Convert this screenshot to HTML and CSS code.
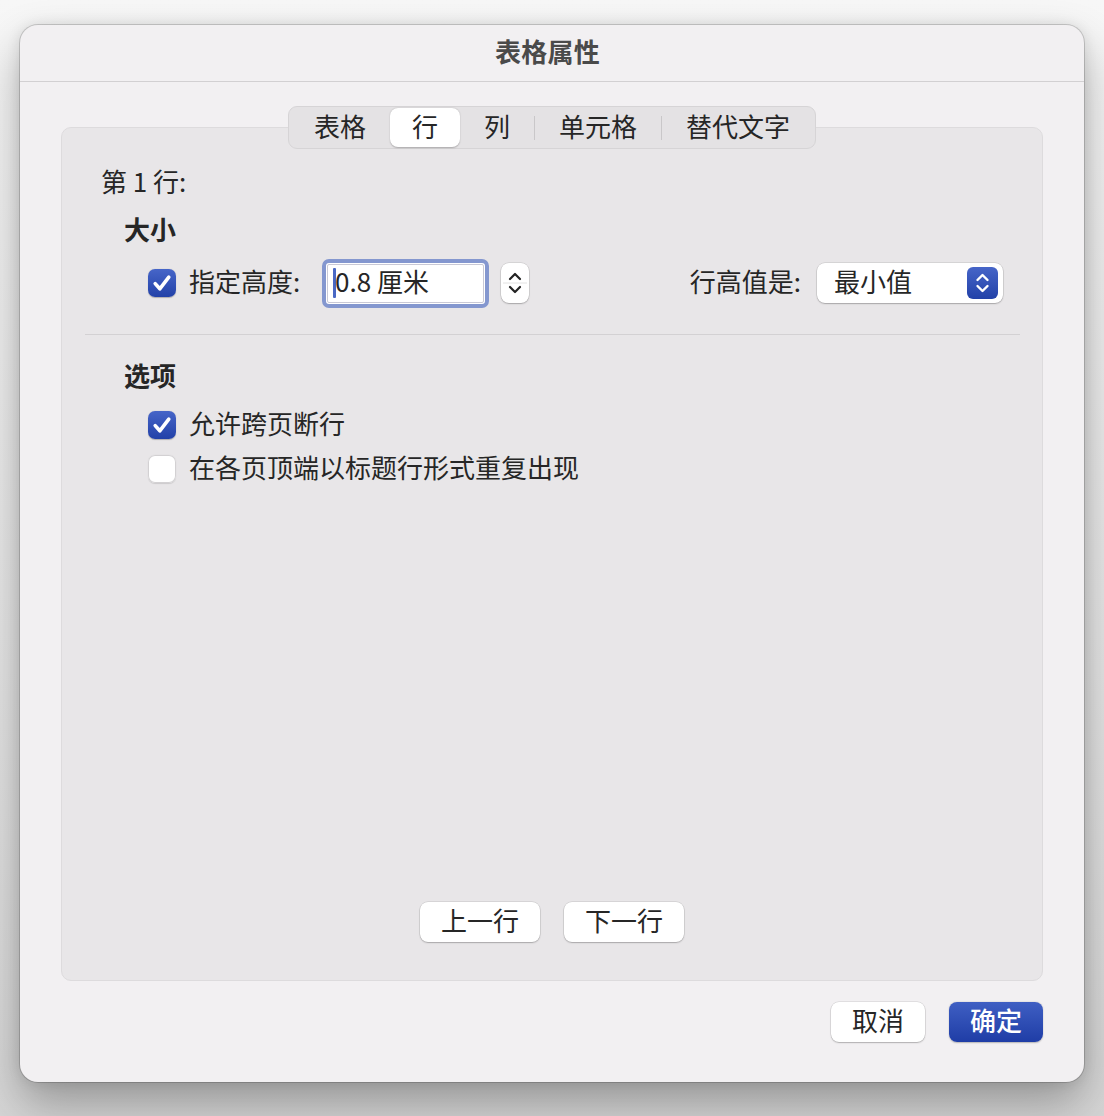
FILE: index.html
```html
<!DOCTYPE html>
<html lang="zh-CN">
<head>
<meta charset="utf-8">
<title>表格属性</title>
<link rel="stylesheet" href="styles.css">
</head>
<body>
<div class="window">
  <div class="titlebar"><span class="title-text">表格属性</span></div>
  <div class="content">
    <div class="tabs">
      <div class="tab">表格</div>
      <div class="tab active">行</div>
      <div class="tab">列</div>
      <div class="tab-sep"></div>
      <div class="tab">单元格</div>
      <div class="tab-sep"></div>
      <div class="tab">替代文字</div>
    </div>
    <div class="group">
      <div class="row-label">第 1 行:</div>
      <div class="section-title">大小</div>
      <div class="size-row">
        <div class="size-left">
          <span class="checkbox checked">
            <svg viewBox="0 0 28 28" width="28" height="28"><path d="M7.2 14.6 L11.8 19.8 L20.8 8.2" fill="none" stroke="#fff" stroke-width="3.6" stroke-linecap="round" stroke-linejoin="round"/></svg>
          </span>
          <span class="field-label">指定高度:</span>
          <div class="textfield">
            <div class="textfield-inner"><span class="caret"></span><span class="field-value">0.8 厘米</span></div>
          </div>
          <div class="stepper">
            <svg viewBox="0 0 28 40" width="28" height="40">
              <path d="M9 16 L14 11 L19 16" fill="none" stroke="#222" stroke-width="2.2" stroke-linecap="round" stroke-linejoin="round"/>
              <line x1="2" y1="20" x2="26" y2="20" stroke="#e2e2e2" stroke-width="1"/>
              <path d="M9 24 L14 29 L19 24" fill="none" stroke="#222" stroke-width="2.2" stroke-linecap="round" stroke-linejoin="round"/>
            </svg>
          </div>
        </div>
        <div class="size-right">
          <span class="popup-label">行高值是:</span>
          <div class="popup">
            <span class="popup-text">最小值</span>
            <span class="popup-arrows">
              <svg viewBox="0 0 31 32" width="31" height="32">
                <path d="M10.5 13 L15.5 8 L20.5 13" fill="none" stroke="#fff" stroke-width="2.4" stroke-linecap="round" stroke-linejoin="round"/>
                <path d="M10.5 19 L15.5 24 L20.5 19" fill="none" stroke="#fff" stroke-width="2.4" stroke-linecap="round" stroke-linejoin="round"/>
              </svg>
            </span>
          </div>
        </div>
      </div>
      <div class="divider"></div>
      <div class="section-title options-title">选项</div>
      <div class="check-row first">
        <span class="checkbox checked">
          <svg viewBox="0 0 28 28" width="28" height="28"><path d="M7.2 14.6 L11.8 19.8 L20.8 8.2" fill="none" stroke="#fff" stroke-width="3.6" stroke-linecap="round" stroke-linejoin="round"/></svg>
        </span>
        <span class="check-text">允许跨页断行</span>
      </div>
      <div class="check-row">
        <span class="checkbox"></span>
        <span class="check-text">在各页顶端以标题行形式重复出现</span>
      </div>
      <div class="nav-buttons">
        <div class="button">上一行</div>
        <div class="button">下一行</div>
      </div>
    </div>
    <div class="footer">
      <div class="button footer-btn">取消</div>
      <div class="button footer-btn primary">确定</div>
    </div>
  </div>
</div>
</body>
</html>
```
FILE: styles.css
```css
html, body {
  margin: 0;
  padding: 0;
}
body {
  width: 1104px;
  height: 1116px;
  background: linear-gradient(180deg, #f7f7f7 0%, #e6e6e6 60%, #d6d6d6 100%);
  font-family: "Noto Sans CJK SC", "Noto Sans", sans-serif;
  color: #262626;
  overflow: hidden;
  padding-top: 25px;
  box-sizing: border-box;
}
.window {
  margin-left: 20px;
  width: 1064px;
  height: 1057px;
  background: #f2f0f2;
  border-radius: 18px;
  box-shadow: 0 0 0 1px rgba(0,0,0,0.16), 0 22px 46px rgba(0,0,0,0.30), 0 0 14px rgba(0,0,0,0.10);
  display: flex;
  flex-direction: column;
  overflow: hidden;
}
.titlebar {
  height: 57px;
  box-sizing: border-box;
  border-bottom: 1px solid #d2d0d2;
  display: flex;
  align-items: center;
  justify-content: center;
  padding: 0 9px 4px 0;
}
.title-text {
  font-size: 26px;
  line-height: 36px;
  font-weight: 700;
  color: #4a4a4a;
  letter-spacing: 0.3px;
}
.content {
  padding: 24px 41px 40px 41px;
  display: flex;
  flex-direction: column;
}
.tabs {
  position: relative;
  z-index: 1;
  align-self: center;
  height: 43px;
  box-sizing: border-box;
  border: 1px solid #d6d4d6;
  background: #e4e2e4;
  border-radius: 9px;
  padding: 1px;
  display: flex;
  align-items: center;
}
.tab {
  height: 39px;
  box-sizing: border-box;
  line-height: 36px;
  padding: 0 24px 3px 24px;
  font-size: 26px;
  color: #262626;
  border-radius: 8px;
}
.tab.active {
  background: #ffffff;
  padding: 0 22px 3px 22px;
  box-shadow: 0 0.5px 1.5px rgba(0,0,0,0.25);
}
.tab-sep {
  width: 1px;
  height: 24px;
  background: #c9c7c9;
}
.group {
  margin-top: -22px;
  height: 854px;
  box-sizing: border-box;
  background: #e8e6e8;
  border: 1px solid #dddbdd;
  border-radius: 10px;
  padding: 37px 39px 38px 39px;
  display: flex;
  flex-direction: column;
}
.row-label {
  font-size: 26px;
  line-height: 32px;
  height: 36px;
}
.section-title {
  font-size: 26px;
  font-weight: 700;
  line-height: 32px;
  height: 36px;
  margin-top: 12px;
  padding-left: 23px;
}
.size-row {
  margin-top: 9px;
  height: 50px;
  display: flex;
  align-items: center;
  justify-content: space-between;
  padding-left: 47px;
}
.size-left, .size-right {
  display: flex;
  align-items: center;
}
.checkbox {
  width: 28px;
  height: 28px;
  box-sizing: border-box;
  border-radius: 7px;
  background: #ffffff;
  box-shadow: inset 0 0 0 1px #d3d1d3, 0 0.5px 1px rgba(0,0,0,0.12);
  display: inline-flex;
  flex: none;
}
.checkbox.checked {
  background: linear-gradient(180deg, #4665c8 0%, #2241a8 100%);
  box-shadow: 0 0.5px 1px rgba(0,0,0,0.25);
}
.field-label {
  margin-left: 13px;
  width: 120px;
  margin-right: 13px;
  font-size: 26px;
  line-height: 36px;
  padding-bottom: 4px;
}
.textfield {
  width: 167px;
  height: 49px;
  box-sizing: border-box;
  border: 4px solid #8497cf;
  border-radius: 7px;
  background: #ffffff;
  padding: 1px;
}
.textfield-inner {
  height: 100%;
  box-sizing: border-box;
  border: 1px solid #c9c9d6;
  border-radius: 2px;
  display: flex;
  align-items: center;
  padding-left: 5px;
  color: #262626;
}
.field-value {
  font-size: 26px;
  line-height: 36px;
  padding-bottom: 4px;
}
.caret {
  width: 3px;
  height: 30px;
  background: #4a68c4;
  border-radius: 1px;
  margin-right: -1px;
}
.stepper {
  margin-left: 12px;
  width: 28px;
  height: 40px;
  background: #ffffff;
  border-radius: 8px;
  box-shadow: 0 0 0 0.5px rgba(0,0,0,0.15), 0 1px 1.5px rgba(0,0,0,0.22);
  display: flex;
}
.popup-label {
  font-size: 26px;
  line-height: 36px;
  margin-right: 16px;
  padding-bottom: 4px;
}
.popup {
  width: 186px;
  height: 40px;
  box-sizing: border-box;
  background: #ffffff;
  border-radius: 8px;
  box-shadow: 0 0 0 0.5px rgba(0,0,0,0.15), 0 1px 1.5px rgba(0,0,0,0.22);
  display: flex;
  align-items: center;
  justify-content: space-between;
  padding: 0 5px 0 17px;
}
.popup-text {
  font-size: 26px;
  line-height: 36px;
  padding-bottom: 4px;
}
.popup-arrows {
  width: 31px;
  height: 32px;
  border-radius: 6px;
  background: linear-gradient(180deg, #4665c8 0%, #2241a8 100%);
  display: flex;
}
.divider {
  margin: 26px -17px 0 -16px;
  height: 1px;
  background: #d3d1d3;
}
.options-title {
  margin-top: 24px;
}
.check-row {
  height: 44px;
  display: flex;
  align-items: center;
  padding-left: 47px;
}
.check-row.first {
  margin-top: 8px;
}
.check-text {
  margin-left: 13px;
  font-size: 26px;
  line-height: 36px;
  padding-bottom: 4px;
}
.nav-buttons {
  margin-top: auto;
  display: flex;
  justify-content: center;
  gap: 24px;
}
.button {
  width: 120px;
  height: 40px;
  box-sizing: border-box;
  background: #ffffff;
  border-radius: 8px;
  box-shadow: 0 0 0 0.5px rgba(0,0,0,0.14), 0 1px 1.5px rgba(0,0,0,0.22);
  display: flex;
  align-items: center;
  justify-content: center;
  font-size: 26px;
  line-height: 36px;
  padding-bottom: 4px;
  color: #262626;
}
.footer {
  margin-top: 21px;
  display: flex;
  justify-content: flex-end;
  gap: 24px;
}
.footer-btn {
  width: 94px;
}
.footer-btn.primary {
  background: linear-gradient(180deg, #3f5fc3 0%, #1f3da6 100%);
  color: #ffffff;
  font-weight: 500;
  box-shadow: 0 0.5px 1.5px rgba(0,0,0,0.25);
}
```
